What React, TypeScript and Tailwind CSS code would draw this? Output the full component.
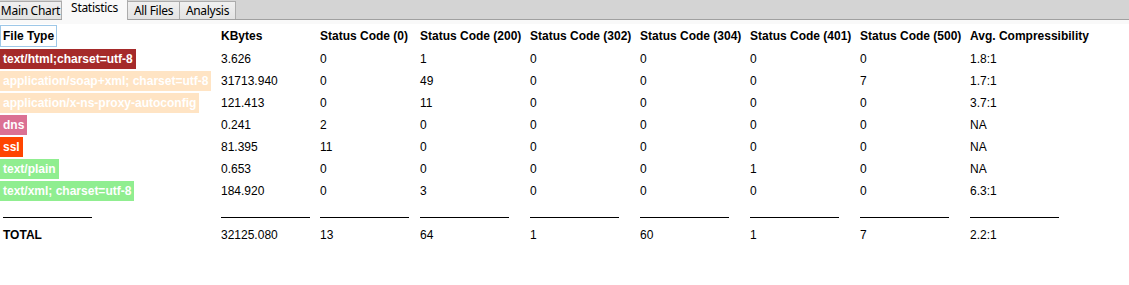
const rows = [
  { type: "text/html;charset=utf-8", bg: "bg-[#a52a2a]", kb: "3.626", c: ["0", "1", "0", "0", "0", "0"], avg: "1.8:1" },
  { type: "application/soap+xml; charset=utf-8", bg: "bg-[#ffe4c4]", kb: "31713.940", c: ["0", "49", "0", "0", "0", "7"], avg: "1.7:1" },
  { type: "application/x-ns-proxy-autoconfig", bg: "bg-[#ffe4c4]", kb: "121.413", c: ["0", "11", "0", "0", "0", "0"], avg: "3.7:1" },
  { type: "dns", bg: "bg-[#db7093]", kb: "0.241", c: ["2", "0", "0", "0", "0", "0"], avg: "NA" },
  { type: "ssl", bg: "bg-[#ff4500]", kb: "81.395", c: ["11", "0", "0", "0", "0", "0"], avg: "NA" },
  { type: "text/plain", bg: "bg-[#90ee90]", kb: "0.653", c: ["0", "0", "0", "0", "1", "0"], avg: "NA" },
  { type: "text/xml; charset=utf-8", bg: "bg-[#90ee90]", kb: "184.920", c: ["0", "3", "0", "0", "0", "0"], avg: "6.3:1" },
];

const headers = ["KBytes", "Status Code (0)", "Status Code (200)", "Status Code (302)", "Status Code (304)", "Status Code (401)", "Status Code (500)", "Avg. Compressibility"];
const totals = ["32125.080", "13", "64", "1", "60", "1", "7", "2.2:1"];

const grid = "grid grid-cols-[221px_99px_100px_110px_110px_110px_110px_110px_1fr] items-center";

export default function App() {
  return (
    <div className="w-[1129px] h-[285px] bg-white text-black text-[12px] font-['Liberation_Sans',Arial,sans-serif] overflow-hidden">
      {/* Tab strip */}
      <div className="flex items-end h-[20px] bg-[#d4d4d4] border-b border-[#a0a0a0] text-[12px] tracking-[-0.3px] font-['Noto_Sans',sans-serif]">
        <div className="w-[62px] h-[18px] flex items-center justify-center pt-[1px] bg-gradient-to-b from-[#f0f0f0] to-[#e3e3e3] border-r border-t border-[#acacac]">Main Chart</div>
        <div className="w-[66px] h-[21px] -mb-px flex items-start justify-center bg-[#f9f9f9] border-r border-[#acacac] z-10">Statistics</div>
        <div className="w-[52px] h-[18px] flex items-center justify-center pt-[1px] bg-gradient-to-b from-[#f0f0f0] to-[#e3e3e3] border-r border-t border-[#acacac]">All Files</div>
        <div className="w-[56px] h-[18px] flex items-center justify-center pt-[1px] bg-gradient-to-b from-[#f0f0f0] to-[#e3e3e3] border-r border-t border-[#acacac]">Analysis</div>
      </div>
      <div className="h-[4px] bg-[#f9f9f9]" />

      {/* Header */}
      <div className={`${grid} h-[24px] font-bold`}>
        <div>
          <span className="inline-block px-[2px] py-[2px] border border-[#9ec8e8] leading-[16px]">File Type</span>
        </div>
        {headers.map((h) => (
          <div key={h}>{h}</div>
        ))}
      </div>

      {/* Rows */}
      {rows.map((r) => (
        <div key={r.type} className={`${grid} h-[22px]`}>
          <div>
            <span className={`inline-block ${r.bg} text-white font-bold px-[3px] h-[20px] leading-[20px]`}>{r.type}</span>
          </div>
          <div>{r.kb}</div>
          {r.c.map((v, i) => (
            <div key={i}>{v}</div>
          ))}
          <div>{r.avg}</div>
        </div>
      ))}

      {/* Separators */}
      <div className={`${grid} h-[16px] items-end`}>
        {totals.concat([""]).map((_, i) => (
          <div key={i} className="pr-[10px]">
            <div className={`h-px bg-black ${i === 0 ? "w-[89px] ml-[3px]" : "w-[89px]"}`} />
          </div>
        ))}
      </div>

      {/* Total */}
      <div className={`${grid} h-[34px]`}>
        <div className="pl-[3px] font-bold">TOTAL</div>
        {totals.map((t, i) => (
          <div key={i}>{t}</div>
        ))}
      </div>
    </div>
  );
}
